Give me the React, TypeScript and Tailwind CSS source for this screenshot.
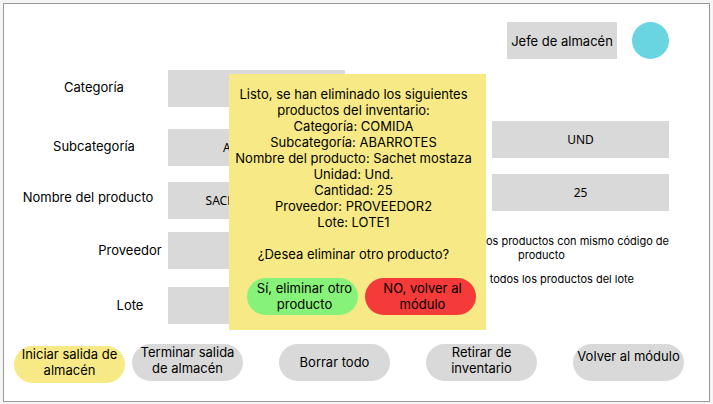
import type { ReactNode } from "react";

type FieldProps = {
  id: string;
  label: string;
  value: string;
  className?: string;
  labelClassName?: string;
};

const inputStyle =
  "h-[37px] w-[177px] shrink-0 bg-[#d9d9d9] text-center font-['Noto_Sans','Open_Sans',sans-serif] text-[12px] leading-4 text-black outline-none";

function Field({ id, label, value, className = "", labelClassName = "" }: FieldProps) {
  return (
    <div className={`flex items-center justify-end ${className}`}>
      <label htmlFor={id} className={`whitespace-nowrap text-center ${labelClassName}`}>
        {label}
      </label>
      <input id={id} readOnly value={value} className={inputStyle} />
    </div>
  );
}

function Pill({ children, className = "" }: { children: ReactNode; className?: string }) {
  return (
    <button
      type="button"
      className={`flex h-[37px] w-[111px] shrink-0 justify-center rounded-full text-center ${className}`}
    >
      {children}
    </button>
  );
}

function Details() {
  return (
    <section className="flex w-[341px] flex-col">
      <Field id="categoria" label="Categoría" value="" labelClassName="w-[148px] pb-1" />
      <Field id="subcategoria" label="Subcategoría" value="ABARROTES" className="mt-[22px]" labelClassName="w-[148px] pb-1" />
      <Field
        id="producto"
        label="Nombre del producto"
        value="SACHET MOSTAZA"
        className="mt-4"
        labelClassName="w-[160px] pb-2"
      />
      <Field id="proveedor" label="Proveedor" value="" className="mt-[13px]" labelClassName="w-[76px] pb-[2px]" />
      <Field id="lote" label="Lote" value="" className="mt-[18px]" labelClassName="w-[76px] pb-[2px]" />
    </section>
  );
}

function Quantities() {
  return (
    <section className="flex w-[274px] flex-col pt-[51px]">
      <input aria-label="Unidad" readOnly value="UND" className={`${inputStyle} self-end`} />
      <input aria-label="Cantidad" readOnly value="25" className={`${inputStyle} mt-4 self-end`} />
      <fieldset className="mt-[23px] text-[11px] leading-[14px]">
        <label className="flex items-center justify-between">
          <input type="radio" name="alcance" className="size-3 shrink-0" />
          <span className="whitespace-nowrap text-center">
            Retirar todos los productos con mismo código de
            <br />
            producto
          </span>
        </label>
        <label className="mt-[10px] flex items-center justify-between pr-[35px]">
          <input type="radio" name="alcance" className="size-3 shrink-0" />
          <span className="whitespace-nowrap">todos los productos del lote</span>
        </label>
      </fieldset>
    </section>
  );
}

function Confirmation() {
  return (
    <div className="pointer-events-none absolute inset-0 flex items-start justify-center pl-[2px] pt-[70px]">
      <div
        role="dialog"
        aria-label="Productos eliminados"
        className="pointer-events-auto flex h-64 w-[257px] flex-col bg-[#f7ea86] pt-3"
      >
        <div className="pr-2 text-center">
          <p>
            Listo, se han eliminado los siguientes
            <br />
            productos del inventario:
          </p>
          <p>Categoría: COMIDA</p>
          <p>Subcategoría: ABARROTES</p>
          <p className="whitespace-nowrap">Nombre del producto: Sachet mostaza</p>
          <p>Unidad: Und.</p>
          <p>Cantidad: 25</p>
          <p>Proveedor: PROVEEDOR2</p>
          <p>Lote: LOTE1</p>
          <p className="mt-4">¿Desea eliminar otro producto?</p>
        </div>
        <div className="mt-4 flex gap-[7px] pl-[18px]">
          <Pill className="bg-[#87f279] pl-1 pt-[2px]">
            Sí, eliminar otro
            <br />
            producto
          </Pill>
          <Pill className="bg-[#f53a3a] pl-1 pt-[2px]">
            NO, volver al
            <br />
            módulo
          </Pill>
        </div>
      </div>
    </div>
  );
}

export default function App() {
  return (
    <div className="flex min-h-screen flex-col bg-[#f5f5f5] px-[3px] pb-[2px] pt-[3px] font-['Inter','Liberation_Sans',sans-serif] text-[13px] leading-4 text-black">
      <div className="relative flex flex-1 flex-col border border-[#999999] bg-white">
        <header className="flex items-center justify-end gap-[15px] pr-10 pt-[18px]">
          <div className="flex h-[37px] w-[110px] items-center justify-center whitespace-nowrap bg-[#d9d9d9]">
            Jefe de almacén
          </div>
          <div className="size-[37px] rounded-full bg-[#69d5e1]" />
        </header>
        <main className="mt-[11px] flex justify-between pr-10">
          <Details />
          <Quantities />
        </main>
        <footer className="mt-5 flex items-start justify-between pb-4 pl-[10px] pr-[25px]">
          <div className="flex gap-[7px]">
            <Pill className="mt-[2px] bg-[#f7ea86]">
              Iniciar salida de
              <br />
              almacén
            </Pill>
            <Pill className="bg-[#d9d9d9]">
              Terminar salida
              <br />
              de almacén
            </Pill>
          </div>
          <Pill className="items-center bg-[#d9d9d9] pb-[2px]">Borrar todo</Pill>
          <Pill className="bg-[#d9d9d9]">
            Retirar de
            <br />
            inventario
          </Pill>
          <Pill className="bg-[#d9d9d9] pt-1">Volver al módulo</Pill>
        </footer>
        <Confirmation />
      </div>
    </div>
  );
}
